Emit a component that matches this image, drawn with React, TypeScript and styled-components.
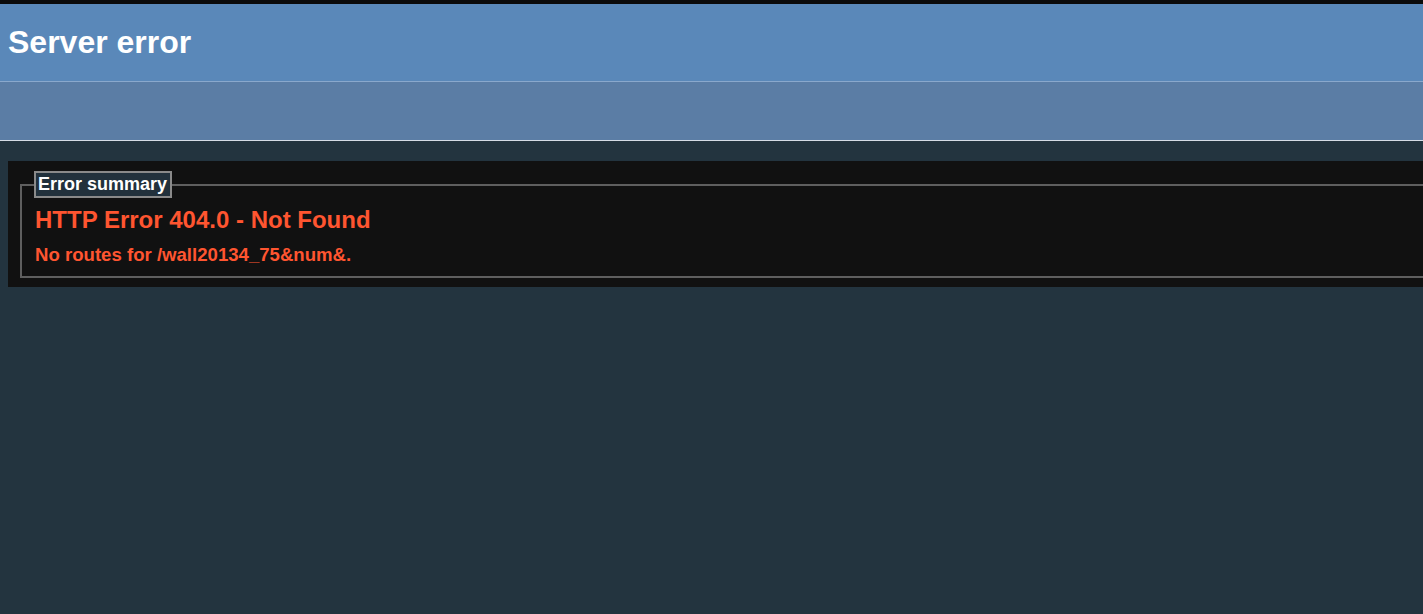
import React from "react";
import styled, { createGlobalStyle } from "styled-components";

const Global = createGlobalStyle`
  html, body {
    margin: 0;
    padding: 0;
    background: #23343f;
    overflow: hidden;
  }
  body {
    font-family: "Liberation Sans", Arial, sans-serif;
  }
`;

const Page = styled.div`
  min-height: 614px;
  background: #23343f;
  display: flex;
  flex-direction: column;
`;

const TopBar = styled.div`
  height: 4px;
  background: #0b0b0b;
`;

const Header = styled.header`
  box-sizing: border-box;
  height: 78px;
  padding: 20px 8px 0;
  background: #5a88b9;
  border-bottom: 1px solid #8aa8cc;
`;

const Title = styled.h1`
  margin: 0;
  font-size: 32px;
  font-weight: bold;
  color: #ffffff;
`;

const SubBand = styled.div`
  box-sizing: border-box;
  height: 59px;
  background: #5b7da5;
  border-bottom: 1px solid #d6dde6;
`;

const Content = styled.main`
  padding: 20px 0 0 8px;
`;

const Card = styled.section`
  box-sizing: border-box;
  width: 1500px;
  background: #111111;
  padding: 10px 12px 9px;
`;

const Fieldset = styled.fieldset`
  margin: 0;
  padding: 0 13px 10px 13px;
  border: 2px solid #5f5f5f;
  min-width: 0;
`;

const Legend = styled.legend`
  margin-left: -1px;
  padding: 1px 3px 2px 2px;
  border: 2px solid #8a8a8a;
  background: #22313c;
  color: #ffffff;
  font-size: 18px;
  font-weight: bold;
  line-height: 20px;
`;

const ErrorTitle = styled.h2`
  margin: 8px 0 0;
  font-size: 24px;
  font-weight: bold;
  color: #ff5530;
`;

const ErrorDetail = styled.h3`
  margin: 10px 0 0;
  font-size: 18.6px;
  font-weight: bold;
  color: #ff5530;
`;

export default function App() {
  return (
    <>
      <Global />
      <Page>
        <TopBar />
        <Header>
          <Title>Server error</Title>
        </Header>
        <SubBand />
        <Content>
          <Card>
            <Fieldset>
              <Legend>Error summary</Legend>
              <ErrorTitle>HTTP Error 404.0 - Not Found</ErrorTitle>
              <ErrorDetail>No routes for /wall20134_75&amp;num&amp;.</ErrorDetail>
            </Fieldset>
          </Card>
        </Content>
      </Page>
    </>
  );
}
